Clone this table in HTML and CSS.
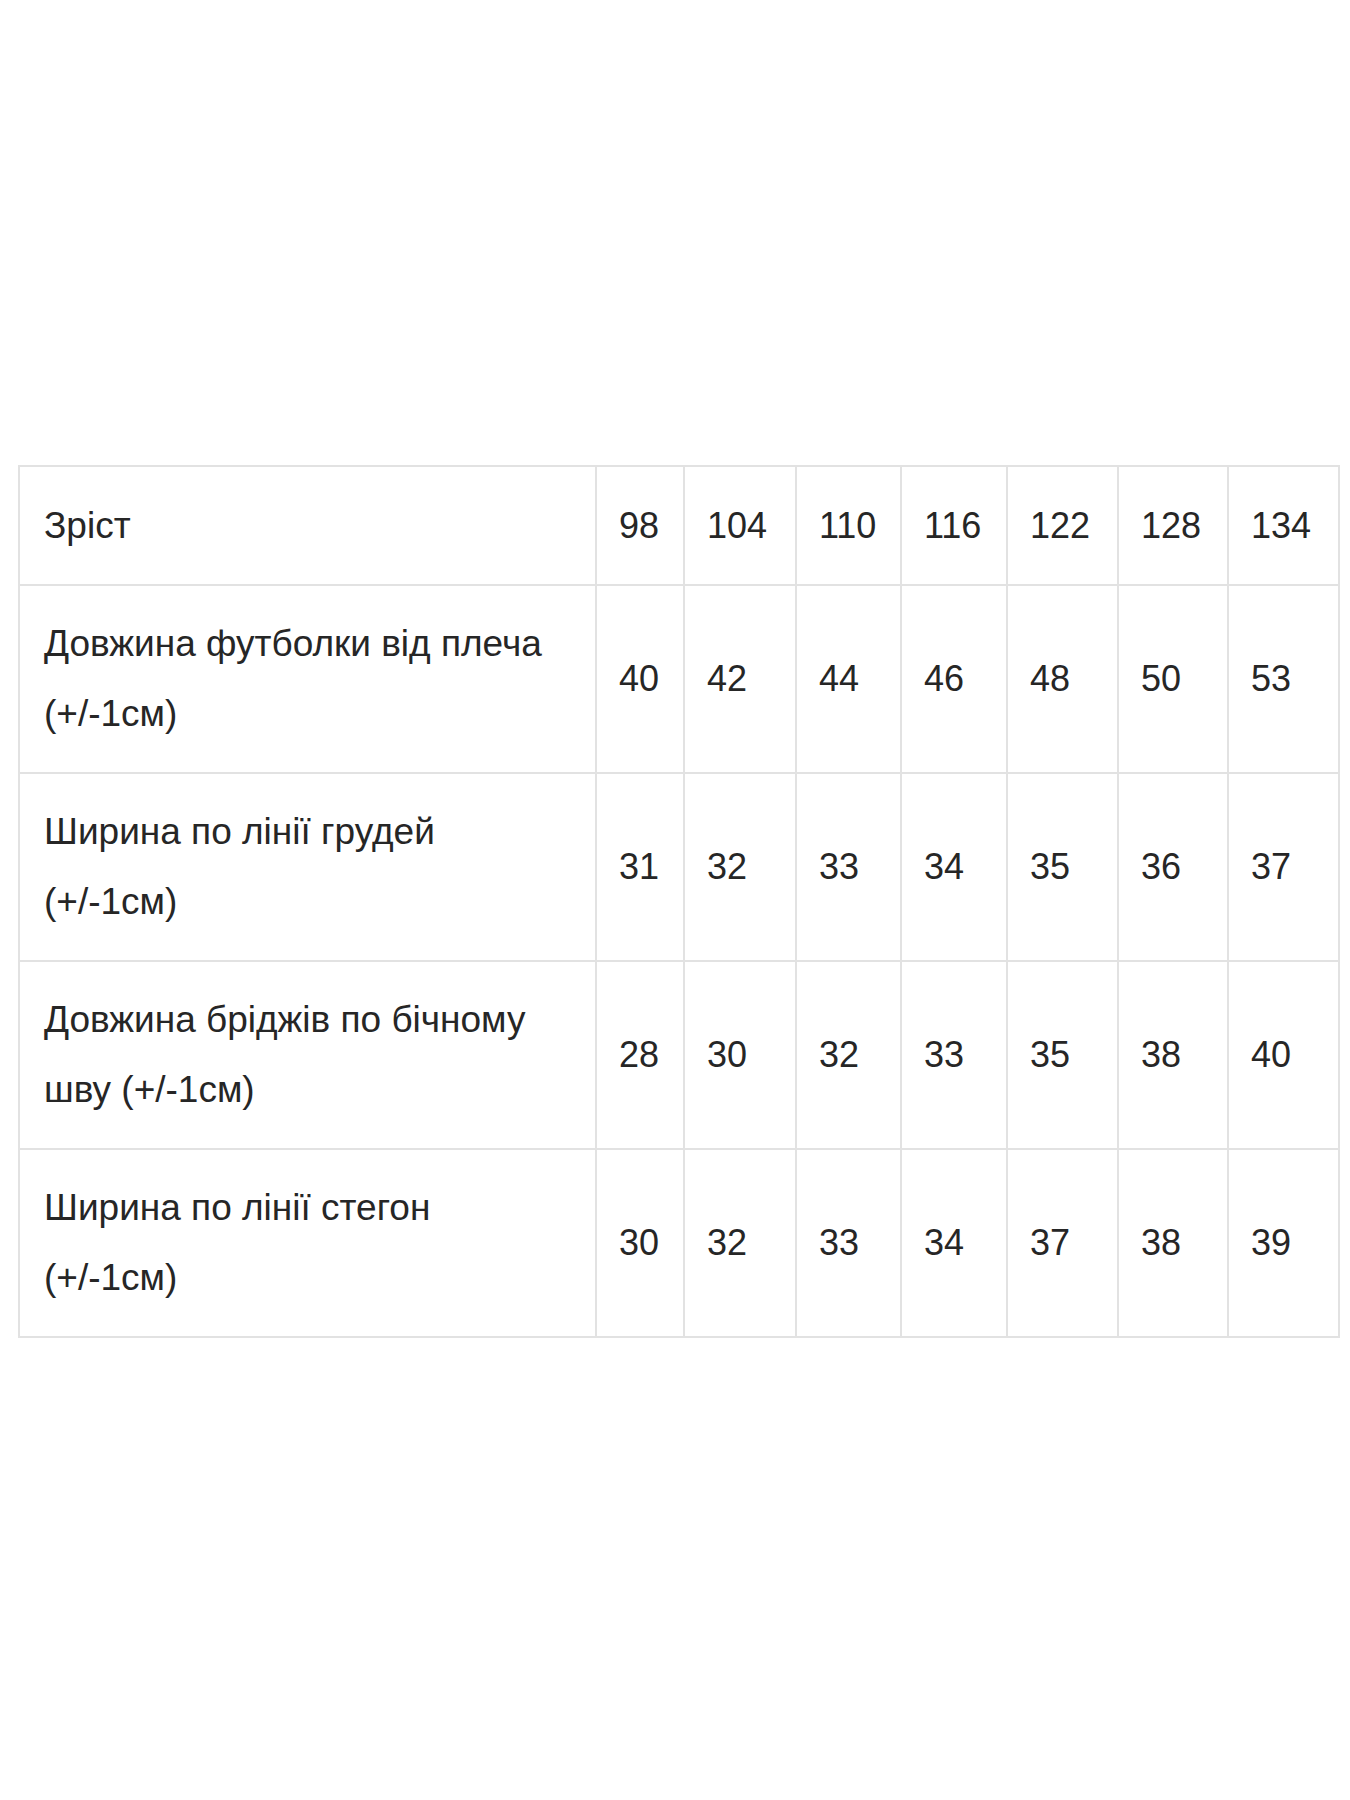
FILE: index.html
```html
<!DOCTYPE html>
<html lang="uk">
<head>
<meta charset="utf-8">
<title>Розмірна сітка</title>
<link rel="stylesheet" href="styles.css">
</head>
<body>
<main class="page">
  <table class="sizes">
    <colgroup>
      <col class="c-label">
      <col class="c-98">
      <col class="c-104">
      <col class="c-110">
      <col class="c-116">
      <col class="c-122">
      <col class="c-128">
      <col class="c-134">
    </colgroup>
    <tbody>
      <tr class="row-head">
        <td>Зріст</td><td>98</td><td>104</td><td>110</td><td>116</td><td>122</td><td>128</td><td>134</td>
      </tr>
      <tr>
        <td><span class="ln">Довжина футболки від плеча</span> <span class="ln">(+/-1см)</span></td><td>40</td><td>42</td><td>44</td><td>46</td><td>48</td><td>50</td><td>53</td>
      </tr>
      <tr>
        <td><span class="ln">Ширина по лінії грудей</span> <span class="ln">(+/-1см)</span></td><td>31</td><td>32</td><td>33</td><td>34</td><td>35</td><td>36</td><td>37</td>
      </tr>
      <tr>
        <td><span class="ln">Довжина бріджів по бічному</span> <span class="ln">шву (+/-1см)</span></td><td>28</td><td>30</td><td>32</td><td>33</td><td>35</td><td>38</td><td>40</td>
      </tr>
      <tr>
        <td><span class="ln">Ширина по лінії стегон</span> <span class="ln">(+/-1см)</span></td><td>30</td><td>32</td><td>33</td><td>34</td><td>37</td><td>38</td><td>39</td>
      </tr>
    </tbody>
  </table>
</main>
</body>
</html>
```
FILE: styles.css
```css
html, body {
  margin: 0;
  padding: 0;
  background: #ffffff;
}

.page {
  padding: 465px 0 0 18px;
}

.sizes {
  border-collapse: collapse;
  table-layout: fixed;
  width: 1320px;
  font-family: "Liberation Sans", Arial, sans-serif;
  font-size: 36px;
  line-height: 70px;
  color: #262626;
}

.c-label { width: 577px; }
.c-98 { width: 88px; }
.c-104 { width: 112px; }
.c-110 { width: 105px; }
.c-116 { width: 106px; }
.c-122 { width: 111px; }
.c-128 { width: 110px; }
.c-134 { width: 111px; }

.sizes td {
  border: 2px solid #e2e2e2;
  padding: 23px 22px 23px 22px;
  vertical-align: middle;
  text-align: left;
}

.sizes td:first-child {
  font-size: 37px;
  padding-left: 24px;
  padding-right: 16px;
}

.ln {
  display: block;
  white-space: nowrap;
}

.row-head td {
  padding-top: 24px;
  padding-bottom: 23px;
}
```
